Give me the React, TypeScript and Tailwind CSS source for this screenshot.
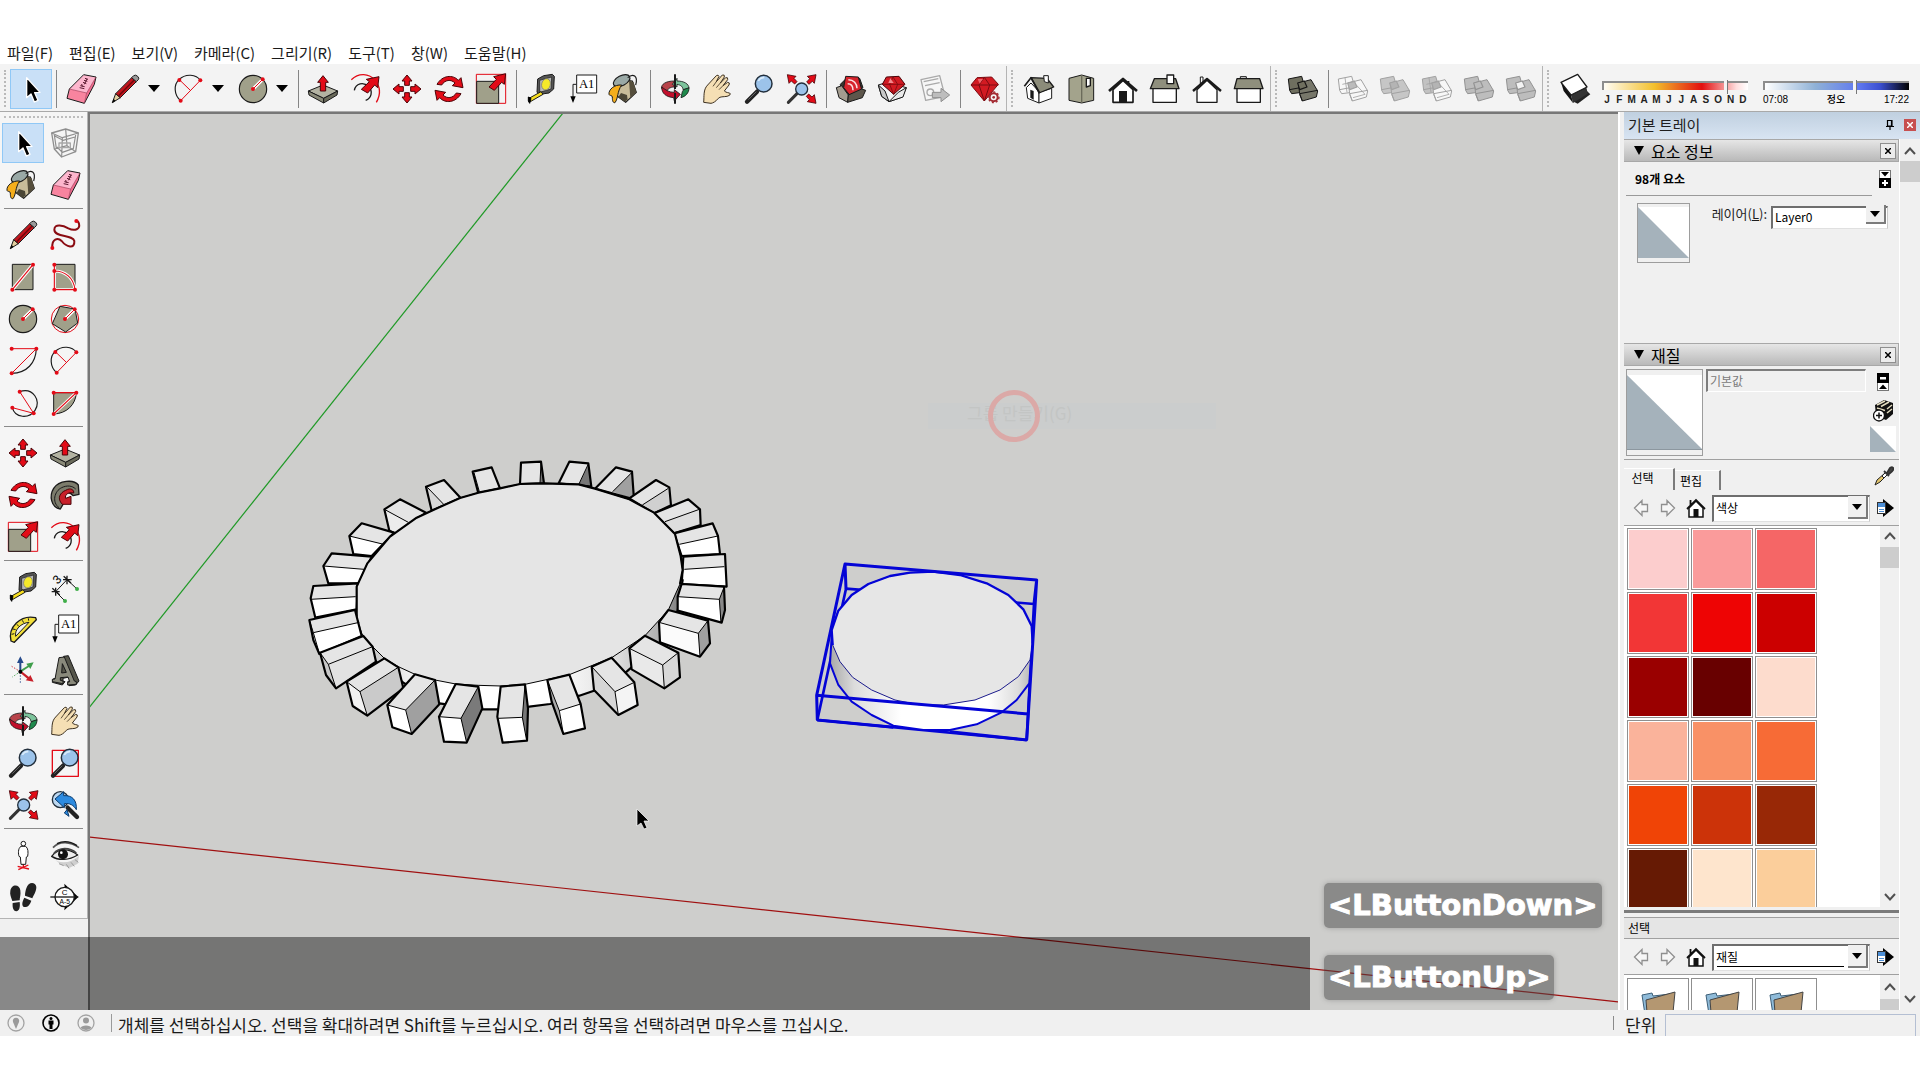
import React, { ReactNode } from "react";

/* ---------- Icon drawings, all on a 96 x 96 grid ---------- */

const RED = "#e30b17";
const DARK = "#1a1a1a";
const OLIVE = "#a0a08a";

function Svg({ children }: { children: ReactNode }) {
  return (
    <svg viewBox="0 0 96 96" className="size-8 shrink-0 overflow-visible" fill="none" strokeLinejoin="round" aria-hidden="true">
      {children}
    </svg>
  );
}

function Dots({ at }: { at: [number, number][] }) {
  return (
    <>
      {at.map(([x, y]) => (
        <circle key={x + "-" + y} cx={x} cy={y} r="6" fill={RED} />
      ))}
    </>
  );
}

const SelectIcon = () => (
  <Svg>
    <path d="M35 14V74L48 63L58 87L69 82L59 59L75 58Z" fill="#000" stroke="#fff" strokeWidth="4" />
  </Svg>
);

const EraserIcon = () => (
  <Svg>
    <path d="M56 5L93 12L65 60L13 48Z" fill="#fdb6cd" />
    <path d="M13 48L65 60L58 91L6 76Z" fill="#f8849f" />
    <path d="M93 12L88 34L58 91L65 60Z" fill="#f06c8e" />
    <path d="M56 5L93 12L88 34L58 91L6 76L13 48Z" stroke={DARK} strokeWidth="3" />
    <path d="M13 48L65 60L93 12M65 60L58 91" stroke="#a33a58" strokeWidth="2" />
    <path d="M44 44l14 3M46 38l13 3M50 33l2 8M54 28l10 4M57 22l10 3M60 16l9 3M66 18l-8 16" stroke="#5c1a30" strokeWidth="3" />
  </Svg>
);

const PencilIcon = () => (
  <Svg>
    <path d="M10 89L20 62L34 74Z" fill="#e3cf9f" stroke={DARK} strokeWidth="3" />
    <path d="M10 89L14 79L19 83Z" fill="#000" stroke="#000" />
    <path d="M20 62L68 14L82 26L34 74Z" fill="#c3141c" stroke={DARK} strokeWidth="3" />
    <path d="M29 68L76 20" stroke="#6c070c" strokeWidth="4" />
    <path d="M68 14L74 8Q80 4 86 10Q92 16 88 20L82 26Z" fill="#9a9a9a" stroke={DARK} strokeWidth="3" />
  </Svg>
);

const ArcIcon = () => (
  <Svg>
    <path d="M23 83C2 66 2 34 18 20C38 0 70 4 82 22" stroke={DARK} strokeWidth="3.5" />
    <path d="M20 21L52 52M82 22L23 83" stroke={RED} strokeWidth="3" />
    <Dots at={[[19, 21], [82, 22], [23, 83]]} />
  </Svg>
);

const CircleIcon = () => (
  <Svg>
    <circle cx="48" cy="48" r="41" fill={OLIVE} stroke={DARK} strokeWidth="3.5" />
    <path d="M48 48L77 19" stroke="#fff" strokeWidth="10" />
    <path d="M48 48L77 19" stroke={RED} strokeWidth="3" />
    <Dots at={[[48, 48], [77, 19]]} />
  </Svg>
);

const PushPullIcon = () => (
  <Svg>
    <path d="M4 54L48 36L92 54L50 76Z" fill="#b3b3a2" stroke={DARK} strokeWidth="3" />
    <path d="M4 54L50 76V90L6 66Z" fill="#8a8a78" stroke={DARK} strokeWidth="3" />
    <path d="M92 54L50 76V90L90 66Z" fill="#6a6a5a" stroke={DARK} strokeWidth="3" />
    <path d="M48 8L64 28H56V54H40V28H32Z" fill={RED} stroke="#4a0408" strokeWidth="3" />
  </Svg>
);

const BigArrow = () => <path d="M90 11L86 44L77 36L56 60L37 49L61 26L52 19Z" fill={RED} stroke="#4a0408" strokeWidth="3" />;

const OffsetIcon = () => (
  <Svg>
    <path d="M7 20C30 -2 60 2 76 20C94 40 96 64 82 88" stroke={RED} strokeWidth="4" />
    <path d="M16 52C20 30 44 26 58 40C74 56 66 76 50 82" stroke={DARK} strokeWidth="4" />
    <BigArrow />
  </Svg>
);

const MoveIcon = () => (
  <Svg>
    {[0, 90, 180, 270].map((a) => (
      <path key={a} transform={`rotate(${a} 48 48)`} d="M48 6L63 24H55V37H41V24H33Z" fill={RED} stroke="#4a0408" strokeWidth="3" />
    ))}
  </Svg>
);

const RotateIcon = () => (
  <Svg>
    {[0, 180].map((a) => (
      <path
        key={a}
        transform={`rotate(${a} 48 48)`}
        d="M12 34C28 6 60 4 76 22L84 14L90 44L58 38L66 30C54 18 36 20 26 36Z"
        fill={RED}
        stroke="#4a0408"
        strokeWidth="3"
      />
    ))}
  </Svg>
);

const ScaleIcon = () => (
  <Svg>
    <rect x="4" y="4" width="88" height="87" stroke={RED} strokeWidth="3" />
    <rect x="5" y="25" width="66" height="66" fill={OLIVE} stroke={DARK} strokeWidth="3" />
    <path d="M92 2L88 34L80 28L58 52L42 42L64 19L56 11Z" fill={RED} stroke="#4a0408" strokeWidth="3" />
  </Svg>
);

const TapeIcon = () => (
  <Svg>
    <path d="M38 18L56 8L82 4L88 10L86 48L72 60L44 64L36 58Z" fill="#555" stroke={DARK} strokeWidth="3" />
    <path d="M44 22L80 12L78 48L44 58Z" fill="#b8b8b8" stroke={DARK} strokeWidth="2" />
    <ellipse cx="63" cy="34" rx="13" ry="17" fill="#f6ea2a" stroke="#777" strokeWidth="2" transform="rotate(15 63 34)" />
    <path d="M48 56L12 76L16 86L54 64Z" fill="#f6dd1e" stroke={DARK} strokeWidth="3" />
    <path d="M10 72L18 76L14 91L10 84Z" fill="#000" stroke="#000" strokeWidth="3" />
  </Svg>
);

const TextIcon = () => (
  <Svg>
    <path d="M28 34H18V74" stroke={DARK} strokeWidth="3" />
    <path d="M18 90L10 70H26Z" fill="#000" />
    <rect x="29" y="6" width="60" height="54" fill="#fff" stroke={DARK} strokeWidth="3" />
    <text x="59" y="46" textAnchor="middle" fontSize="38" fontFamily="Liberation Serif, serif" fill="#000">A1</text>
  </Svg>
);

const PaintIcon = () => (
  <Svg>
    <path d="M24 18L70 24L82 58L50 88L20 66Z" fill="#c8bc9a" stroke={DARK} strokeWidth="3.5" />
    <path d="M60 22L74 28L82 58L64 76Z" fill="#554e3c" />
    <path d="M36 60L54 66L56 80L46 86L28 72Z" fill="#4b4636" />
    <ellipse cx="38" cy="23" rx="27" ry="15" fill="#9aa9a6" stroke={DARK} strokeWidth="3.5" transform="rotate(-28 38 23)" />
    <path d="M56 14C72 0 88 8 80 36" stroke={DARK} strokeWidth="3.5" />
    <path d="M38 36C16 34 -2 50 0 64C2 70 8 64 10 72C10 84 12 90 18 89C28 76 24 56 38 36Z" fill="#f5ae1c" stroke={DARK} strokeWidth="3" />
  </Svg>
);

const OrbitIcon = () => (
  <Svg>
    <path d="M46 24C20 24 6 34 8 46L24 56C24 48 34 42 46 42Z" fill="#b8434a" stroke={DARK} strokeWidth="2.5" />
    <path d="M8 42C8 62 22 72 44 74L46 84L64 64L46 50V58C30 58 22 52 8 42Z" fill="#c2102c" stroke={DARK} strokeWidth="2.5" />
    <path d="M54 16L40 34L54 42V34C66 36 72 42 72 50L90 46C90 32 74 24 54 24Z" fill="#7cc39b" stroke={DARK} strokeWidth="2.5" />
    <path d="M90 44C90 60 80 70 66 74L70 56L74 50Z" fill="#1f8a4d" stroke={DARK} strokeWidth="2.5" />
    <path d="M48 4V48M48 60V92" stroke={DARK} strokeWidth="6" />
  </Svg>
);

const HandIcon = () => (
  <Svg>
    <path
      d="M8 88C10 70 6 50 20 36L46 8Q52 4 54 10L46 26L64 6Q72 4 70 12L58 30L74 14Q82 12 80 20L66 38L80 28Q88 28 84 36L70 54C76 60 84 58 88 62Q88 68 78 70C66 72 58 70 52 76C44 86 36 90 30 91Z"
      fill="#f5dfb4"
      stroke="#3c3020"
      strokeWidth="3"
    />
    <path d="M46 26L36 40M58 30L46 44M66 38L54 50" stroke="#3c3020" strokeWidth="2.5" />
  </Svg>
);

const Glass = () => (
  <>
    <path d="M12 86L42 56" stroke="#222" strokeWidth="13" strokeLinecap="round" />
    <path d="M16 80L40 56" stroke="#666" strokeWidth="3" />
    <circle cx="62" cy="32" r="25" fill="#9cc3ea" stroke="#222f3c" strokeWidth="4.5" />
    <path d="M46 24A18 18 0 0 1 64 14" stroke="#d8ebfb" strokeWidth="5" />
  </>
);

const ZoomIcon = () => (
  <Svg>
    <Glass />
  </Svg>
);

const ZoomWindowIcon = () => (
  <Svg>
    <rect x="10" y="10" width="78" height="78" stroke={RED} strokeWidth="4" />
    <Glass />
  </Svg>
);

const ZoomExtentsIcon = () => (
  <Svg>
    <path d="M10 88L36 62" stroke="#333" strokeWidth="9" strokeLinecap="round" />
    <circle cx="50" cy="48" r="18" fill="#9cc3ea" stroke="#222f3c" strokeWidth="4" />
    {[0, 90, 180].map((a) => (
      <path key={a} transform={`rotate(${a} 50 48)`} d="M7 5L33 10L27 16L36 26L29 33L19 24L12 31Z" fill={RED} stroke="#4a0408" strokeWidth="2.5" />
    ))}
  </Svg>
);

const Carton = () => (
  <>
    <path d="M4 36L30 28L88 44L76 72L36 86L14 70Z" fill="#f4f4f4" stroke={DARK} strokeWidth="3" />
    <path d="M4 36L24 54L36 86L14 70Z" fill="#c9c9c9" stroke={DARK} strokeWidth="3" />
    <path d="M88 44L64 58L36 86L78 72Z" fill="#e9e9e9" stroke={DARK} strokeWidth="3" />
  </>
);

const WarehouseIcon = () => (
  <Svg>
    <path d="M16 34L38 12L74 16L84 44L40 76L22 66Z" fill="#3a352e" stroke={DARK} strokeWidth="3" />
    <path d="M32 10L70 12L80 50L44 66L26 44Z" fill="#d7242c" stroke={DARK} strokeWidth="3" />
    <path d="M40 20C56 20 66 32 66 46M38 32C48 32 54 40 54 52" stroke="#fbe3e3" strokeWidth="4.5" />
    <path d="M4 44L20 38L40 66L38 88L12 74Z" fill="#a39c8f" stroke={DARK} strokeWidth="3" />
    <path d="M40 66L80 48L92 52L82 74L38 88Z" fill="#5d564b" stroke={DARK} strokeWidth="3" />
  </Svg>
);

const ExtensionIcon = () => (
  <Svg>
    <Carton />
    <path d="M28 12L66 10L84 34L50 64L16 34Z" fill="#d21a22" stroke="#4a0408" strokeWidth="3" />
    <path d="M16 34H84M38 34L50 64L62 34L48 12Z" stroke="#7c0a10" strokeWidth="2.5" />
    <path d="M40 16L50 30L34 30Z" fill="#f48a8e" />
  </Svg>
);

const LayoutIcon = () => (
  <Svg>
    <path d="M6 20L62 8L78 70L20 82Z" fill="#f6f6f6" stroke="#a9a9a9" strokeWidth="4" />
    <path d="M14 26L58 17M18 38L62 29" stroke="#a9a9a9" strokeWidth="4" />
    <circle cx="34" cy="58" r="10" stroke="#a9a9a9" strokeWidth="4" />
    <path d="M40 58H66V46L92 66L66 86V74H40Z" fill="#bdbdbd" stroke="#8f8f8f" strokeWidth="3" />
  </Svg>
);

const GemIcon = () => (
  <Svg>
    <path d="M24 14L68 12L88 34L46 84L6 36Z" fill="#d21a22" stroke="#7c0a10" strokeWidth="3" />
    <path d="M6 36H88M30 36L46 84L62 36L46 13Z" stroke="#7c0a10" strokeWidth="3" />
    <path d="M26 18H42L32 32Z" fill="#f1666c" />
    <circle cx="74" cy="73" r="12" fill="#f3f3f3" stroke="#a32a31" strokeWidth="6" />
    <circle cx="74" cy="73" r="4" fill="#a32a31" />
    <circle cx="74" cy="73" r="16" stroke="#a32a31" strokeWidth="4" strokeDasharray="6 6" />
  </Svg>
);

/* House views */
const HouseIsoIcon = () => (
  <Svg>
    <path d="M10 44L24 30L48 56V90L14 76Z" fill="#fff" stroke={DARK} strokeWidth="3" />
    <path d="M48 58L86 46V76L48 90Z" fill="#fff" stroke={DARK} strokeWidth="3" />
    <path d="M24 14L72 16L92 42L48 60Z" fill="#8c8c7a" stroke={DARK} strokeWidth="4" />
    <path d="M4 40L24 14L50 60" stroke={DARK} strokeWidth="5" />
    <path d="M62 8H76V30L64 26Z" fill="#fff" stroke={DARK} strokeWidth="3" />
    <path d="M22 50L32 54V80L22 74Z" fill={DARK} />
  </Svg>
);
const HouseTopIcon = () => (
  <Svg>
    <path d="M12 16L50 6L86 16V82L50 90L12 82Z" fill="#a3a38c" stroke={DARK} strokeWidth="3" />
    <path d="M50 6V90" stroke="#6b6b5a" strokeWidth="4" />
    <path d="M64 16H76V38L64 42Z" fill="#fff" stroke={DARK} strokeWidth="4" />
  </Svg>
);
const HouseFrontIcon = () => (
  <Svg>
    <path d="M18 50V88H78V50L48 22Z" fill="#fff" stroke={DARK} strokeWidth="5" />
    <path d="M6 54L48 18L90 54" stroke={DARK} strokeWidth="8" />
    <path d="M64 24V32" stroke={DARK} strokeWidth="6" />
    <path d="M36 88V54H60V88Z" fill={DARK} />
  </Svg>
);
const HouseRightIcon = () => (
  <Svg>
    <rect x="12" y="44" width="70" height="44" fill="#fff" stroke={DARK} strokeWidth="4" />
    <path d="M16 17H80L90 47H4Z" fill="#8f8f7d" stroke={DARK} strokeWidth="4" />
    <rect x="54" y="6" width="20" height="26" fill="#fff" stroke={DARK} strokeWidth="4" />
  </Svg>
);
const HouseBackIcon = () => (
  <Svg>
    <path d="M28 34V12H36V28" fill="#fff" stroke={DARK} strokeWidth="3" />
    <path d="M18 50V88H78V50L48 22Z" fill="#fff" stroke={DARK} strokeWidth="4" />
    <path d="M6 54L48 18L90 54" stroke={DARK} strokeWidth="7" />
  </Svg>
);
const HouseLeftIcon = () => (
  <Svg>
    <path d="M22 16V11H40V16" fill="#ddd" stroke={DARK} strokeWidth="3" />
    <rect x="12" y="44" width="70" height="44" fill="#fff" stroke={DARK} strokeWidth="4" />
    <path d="M12 17H80L90 47H4Z" fill="#8f8f7d" stroke={DARK} strokeWidth="4" />
  </Svg>
);

/* Two overlapping slabs; the fills and edges tell the boolean operations apart */
function Slabs({ a, b, mid, line, wire }: { a: string; b: string; mid: string; line: string; wire?: boolean }) {
  return (
    <Svg>
      <path d="M4 18L44 10L54 44L46 58L14 62L8 52Z" fill={a} stroke={line} strokeWidth="3" />
      <path d="M8 50L50 42" stroke={line} strokeWidth="3" />
      <path d="M34 30L72 20L92 54L88 72L46 84L38 62Z" fill={b} stroke={line} strokeWidth="3" />
      <path d="M38 62L92 52M38 64L46 84" stroke={line} strokeWidth="3" />
      <path d="M32 30L52 24L60 42L38 50Z" fill={mid} stroke={line} strokeWidth="3.5" />
      {wire && <path d="M16 34L52 26M24 14L30 58M56 34L84 64M48 74L84 64" stroke={line} strokeWidth="2.5" />}
    </Svg>
  );
}

const ShadowIcon = () => (
  <Svg>
    <path d="M40 84L56 92L94 64L80 50Z" fill="#222" />
    <path d="M6 28L36 66L42 90L14 54Z" fill="#111" />
    <path d="M36 66L82 42L86 62L42 90Z" fill="#333" />
    <path d="M6 28L56 4L84 42L36 66Z" fill="#fff" stroke={DARK} strokeWidth="4" />
  </Svg>
);

const ComponentIcon = () => (
  <Svg>
    <path d="M8 18L50 6L88 18L80 74L38 90L16 66Z" fill="#f4f4f4" stroke="#8e8e8e" strokeWidth="4" />
    <path d="M8 18L40 32L88 18M40 32L38 90M16 26L42 40L78 30M24 60L40 76L74 64M50 6L54 56L80 74M54 56L16 66M16 24L22 64M80 24L72 70" stroke="#8e8e8e" strokeWidth="3.5" />
    <path d="M30 48H64V62H30Z" stroke="#a8a8a8" strokeWidth="4" />
  </Svg>
);

const FreehandIcon = () => (
  <Svg>
    <path d="M10 86C8 60 26 54 38 66C52 84 78 92 76 66C72 46 16 56 16 32C16 12 44 20 58 28C78 38 94 30 90 14Q88 6 82 6" stroke="#8a0c12" strokeWidth="6" />
    <Dots at={[[10, 87], [82, 6]]} />
  </Svg>
);

const RectIcon = () => (
  <Svg>
    <rect x="16" y="10" width="62" height="76" fill={OLIVE} stroke={DARK} strokeWidth="3" />
    <path d="M16 86L78 11" stroke="#fff" strokeWidth="10" />
    <path d="M16 86L78 11" stroke={RED} strokeWidth="3.5" />
    <Dots at={[[16, 86], [78, 11]]} />
  </Svg>
);

const RotRectIcon = () => (
  <Svg>
    <rect x="16" y="10" width="62" height="76" fill={OLIVE} stroke={DARK} strokeWidth="3" />
    <path d="M16 30C46 30 74 48 78 86H16V11" fill="none" stroke="#fff" strokeWidth="9" />
    <path d="M16 30C46 30 74 48 78 86H16V11" stroke={RED} strokeWidth="3.5" />
    <Dots at={[[16, 11], [16, 30], [16, 86], [78, 86]]} />
  </Svg>
);

const PolygonIcon = () => (
  <Svg>
    <circle cx="48" cy="48" r="41" stroke={RED} strokeWidth="3" />
    <path d="M33 10L78 18L86 60L50 87L10 62Z" fill={OLIVE} stroke={DARK} strokeWidth="3" />
    <path d="M48 48L77 19" stroke="#fff" strokeWidth="10" />
    <path d="M48 48L77 19" stroke={RED} strokeWidth="3" />
    <Dots at={[[48, 48], [77, 19]]} />
  </Svg>
);

const TwoPointArcIcon = () => (
  <Svg>
    <path d="M88 11C86 54 60 84 14 85" stroke={DARK} strokeWidth="3.5" />
    <path d="M14 11H88L14 85" stroke={RED} strokeWidth="3" />
    <Dots at={[[14, 11], [88, 11], [14, 85]]} />
  </Svg>
);

const ThreePointArcIcon = () => (
  <Svg>
    <path d="M38 14C78 0 104 42 84 70C66 96 24 94 16 62" stroke={DARK} strokeWidth="3.5" />
    <path d="M38 14L80 79L16 62" stroke={RED} strokeWidth="3" />
    <Dots at={[[38, 14], [80, 79], [16, 62]]} />
  </Svg>
);

const PieIcon = () => (
  <Svg>
    <path d="M14 17H82C80 54 52 80 14 81Z" fill={OLIVE} stroke={DARK} strokeWidth="3" />
    <path d="M14 81L82 17" stroke="#fff" strokeWidth="9" />
    <path d="M14 17H82L14 81" stroke={RED} strokeWidth="3.5" />
    <Dots at={[[14, 17], [82, 17], [14, 81]]} />
  </Svg>
);

const FollowMeIcon = () => (
  <Svg>
    <path d="M34 90C6 86 0 50 14 28C30 4 74 0 88 18L90 46L72 50C60 34 36 40 36 58C36 66 38 70 42 76Z" fill="#7c7c6c" stroke={DARK} strokeWidth="4" />
    <path d="M30 86C8 70 16 36 38 26C54 18 70 20 80 30" stroke={DARK} strokeWidth="3" />
    <path d="M50 34C66 24 76 34 74 42C58 38 46 48 50 58L66 52V76L40 76C22 58 34 40 50 34Z" fill="#c8202a" stroke="#4a0408" strokeWidth="3" />
  </Svg>
);

const DimensionIcon = () => (
  <Svg>
    <path d="M20 62L54 26M20 62L46 88M54 26L84 54" stroke={DARK} strokeWidth="3" />
    <path d="M10 52L32 72M8 62H32M20 50V74M44 16L66 36M42 26H68M54 14V40" stroke={DARK} strokeWidth="4" />
    <circle cx="48" cy="90" r="6" fill="#3fae49" />
    <circle cx="84" cy="54" r="6" fill="#3fae49" />
    <text x="14" y="38" fontSize="36" fontFamily="Liberation Sans, sans-serif" fill="#000" transform="rotate(-45 24 26)">3</text>
  </Svg>
);

const ProtractorIcon = () => (
  <Svg>
    <path d="M12 84C2 44 40 4 86 14L88 20L22 88Z" fill="#f2df3a" stroke={DARK} strokeWidth="4" />
    <path d="M26 70C22 50 42 30 66 28Z" fill="#f3f3f3" stroke={DARK} strokeWidth="3" />
    <path d="M14 64l8 -2M18 48l8 2M30 34l5 6M46 22l4 7M64 16l1 7" stroke={DARK} strokeWidth="3" />
  </Svg>
);

const AxesIcon = () => (
  <Svg>
    <path d="M40 50L14 34" stroke="#c8202a" strokeWidth="3" strokeDasharray="4 5" />
    <path d="M40 50L16 66" stroke="#3f9e4b" strokeWidth="3" strokeDasharray="4 5" />
    <path d="M40 52V84" stroke="#254a8c" strokeWidth="3" strokeDasharray="4 5" />
    <path d="M40 4L50 24H43V48H37V24H30Z" fill="#254a8c" />
    <path d="M80 22L70 42L66 36L42 52L40 46L62 32L58 26Z" fill="#3f9e4b" />
    <path d="M80 80L56 76L61 71L38 52L43 48L66 66L70 60Z" fill="#c8202a" />
    <circle cx="40" cy="50" r="6" fill="#000" />
  </Svg>
);

const Text3dIcon = () => (
  <Svg>
    <path d="M44 4L58 2L90 78L80 90L60 92L56 80L64 76L60 66L42 70L42 78L48 80L40 90L10 82L12 72L20 70Z" fill="#55554a" stroke={DARK} strokeWidth="3" />
    <path
      d="M30 8L46 6L76 78L82 80V88L56 90V82L62 80L57 66L34 68L34 76L42 78V86L10 80V73L18 72ZM38 54L52 52L40 26Z"
      fill="#8a8a7c"
      stroke={DARK}
      strokeWidth="3"
      fillRule="evenodd"
    />
  </Svg>
);

const PreviousIcon = () => (
  <Svg>
    <path d="M56 56L84 84" stroke="#222" strokeWidth="13" strokeLinecap="round" />
    <circle cx="34" cy="32" r="24" fill="#bcd8f1" stroke="#222f3c" strokeWidth="4" />
    <path d="M18 30L44 8V20C70 18 84 34 82 62C74 48 62 42 46 44V56Z" fill="#2d8be0" stroke="#0c3a6b" strokeWidth="3" />
    <path d="M54 62L60 82L46 72Z" fill="#2d8be0" stroke="#0c3a6b" strokeWidth="3" />
  </Svg>
);

const PositionCameraIcon = () => (
  <Svg>
    <path d="M32 82L66 90M64 78L34 92M49 72V88" stroke={RED} strokeWidth="4" />
    <circle cx="49" cy="14" r="7" fill="#fff" stroke={DARK} strokeWidth="3" />
    <path d="M42 22C32 28 34 46 36 52L40 54L42 76H56L58 54L62 52C64 40 64 28 56 22Z" fill="#fff" stroke={DARK} strokeWidth="3" />
  </Svg>
);

const EyeIcon = () => (
  <Svg>
    <path d="M12 26C32 4 64 8 90 26" stroke="#555" strokeWidth="5" />
    <path d="M24 14C44 4 66 8 84 20" stroke={DARK} strokeWidth="4" />
    <path d="M10 56C30 76 64 74 90 50L86 74L62 86L38 78Z" fill="#cfcfcf" />
    <path d="M30 74L44 80M52 76L60 88M66 70L76 82M78 62L88 70" stroke="#9a9a9a" strokeWidth="3" />
    <path d="M8 52C26 28 58 26 86 48C60 64 30 66 8 52Z" fill="#ededed" stroke={DARK} strokeWidth="4" />
    <path d="M14 44C30 24 62 24 82 42" stroke="#444" strokeWidth="5" />
    <circle cx="42" cy="46" r="15" fill="#111" />
    <circle cx="37" cy="41" r="4" fill="#fff" />
  </Svg>
);

const FeetIcon = () => (
  <Svg>
    <path d="M10 30C12 8 38 8 40 28C42 42 38 50 38 58L16 60C12 48 8 40 10 30ZM17 66L38 63C40 76 38 90 28 91C18 90 16 78 17 66Z" fill="#222" />
    <path d="M58 22C64 0 86 2 88 18C88 32 80 42 76 52L54 44C54 36 56 28 58 22ZM52 50L73 59C68 72 62 80 50 78C42 70 48 58 52 50Z" fill="#222" />
  </Svg>
);

const SectionIcon = () => (
  <Svg>
    <path d="M46 8L88 48L46 88L50 48Z" fill="#000" />
    <circle cx="47" cy="48" r="29" fill="#fff" stroke={DARK} strokeWidth="4" />
    <path d="M4 48H88" stroke={DARK} strokeWidth="4" />
    <text x="47" y="43" textAnchor="middle" fontSize="24" fontFamily="Liberation Sans, sans-serif" fill="#000">C</text>
    <text x="47" y="69" textAnchor="middle" fontSize="20" fontFamily="Liberation Sans, sans-serif" fill="#000">A-5</text>
  </Svg>
);

/* ---------- Tool bars ---------- */

function Tool({ label, active, children }: { label: string; active?: boolean; children: ReactNode }) {
  return (
    <button
      type="button"
      aria-label={label}
      aria-pressed={active}
      className={
        active
          ? "flex h-10 w-[42px] shrink-0 items-center justify-center border border-[#90c8f6] bg-[#c9e0f7]"
          : "flex h-10 w-[42px] shrink-0 items-center justify-center"
      }
    >
      {children}
    </button>
  );
}

function DropTool({ label, children }: { label: string; children: ReactNode }) {
  return (
    <div className="flex shrink-0 items-center">
      <button type="button" aria-label={label} className="flex h-10 w-[46px] items-center justify-center">
        {children}
      </button>
      <button type="button" aria-label={label + " 옵션"} className="flex h-10 w-[18px] items-center">
        <svg viewBox="0 0 12 7" className="h-[7px] w-3" aria-hidden="true">
          <path d="M0 0H12L6 7Z" fill="#000" />
        </svg>
      </button>
    </div>
  );
}

const VSep = () => (
  <div className="flex h-[38px] w-2 shrink-0 justify-center">
    <div className="w-px bg-[#858585]" />
  </div>
);

const BarGap = () => (
  <div className="flex h-full w-3 shrink-0 gap-1">
    <div className="w-px bg-[#b4b4b4]" />
    <div className="my-1 w-0 border-l-2 border-dotted border-[#b9b9b9]" />
  </div>
);

const HSep = () => (
  <div className="flex h-2 items-start px-1 pt-0.5">
    <div className="h-px flex-1 bg-[#8a8a8a]" />
  </div>
);

const MENUS = ["파일(F)", "편집(E)", "보기(V)", "카메라(C)", "그리기(R)", "도구(T)", "창(W)", "도움말(H)"];
const MONTHS = ["J", "F", "M", "A", "M", "J", "J", "A", "S", "O", "N", "D"];

function TopToolbar() {
  return (
    <div className="flex h-12 shrink-0 items-center border-b border-[#a9a9a9] bg-[#f3f3f3] pt-0.5" role="toolbar" aria-label="도구 모음">
      <div className="flex h-full w-[10px] shrink-0 pl-1">
        <div className="my-1 w-0 border-l-2 border-dotted border-[#b9b9b9]" />
      </div>
      <Tool label="선택" active><SelectIcon /></Tool>
      <VSep />
      <Tool label="지우개"><EraserIcon /></Tool>
      <DropTool label="선"><PencilIcon /></DropTool>
      <DropTool label="호"><ArcIcon /></DropTool>
      <DropTool label="원"><CircleIcon /></DropTool>
      <VSep />
      <Tool label="밀기/끌기"><PushPullIcon /></Tool>
      <Tool label="간격띄우기"><OffsetIcon /></Tool>
      <Tool label="이동"><MoveIcon /></Tool>
      <Tool label="회전"><RotateIcon /></Tool>
      <Tool label="배율"><ScaleIcon /></Tool>
      <VSep />
      <Tool label="줄자"><TapeIcon /></Tool>
      <Tool label="텍스트"><TextIcon /></Tool>
      <Tool label="페인트통"><PaintIcon /></Tool>
      <VSep />
      <Tool label="궤도"><OrbitIcon /></Tool>
      <Tool label="이동 보기"><HandIcon /></Tool>
      <Tool label="확대/축소"><ZoomIcon /></Tool>
      <Tool label="범위 확대"><ZoomExtentsIcon /></Tool>
      <VSep />
      <Tool label="3D Warehouse"><WarehouseIcon /></Tool>
      <Tool label="Extension Warehouse"><ExtensionIcon /></Tool>
      <Tool label="LayOut으로 보내기"><LayoutIcon /></Tool>
      <VSep />
      <Tool label="확장 관리자"><GemIcon /></Tool>
      <BarGap />
      <Tool label="등각투영"><HouseIsoIcon /></Tool>
      <Tool label="평면도"><HouseTopIcon /></Tool>
      <Tool label="정면도"><HouseFrontIcon /></Tool>
      <Tool label="우측면도"><HouseRightIcon /></Tool>
      <Tool label="배면도"><HouseBackIcon /></Tool>
      <Tool label="좌측면도"><HouseLeftIcon /></Tool>
      <BarGap />
      <Tool label="외부 셸"><Slabs a="#6f6f5f" b="#77776a" mid="#6f6f5f" line="#161616" /></Tool>
      <VSep />
      <Tool label="교차"><Slabs a="#f7f7f7" b="#f7f7f7" mid="#bcbcbc" line="#a2a2a2" wire /></Tool>
      <Tool label="결합"><Slabs a="#c6c6c6" b="#c6c6c6" mid="#b4b4b4" line="#a2a2a2" /></Tool>
      <Tool label="빼기"><Slabs a="#c2c2c2" b="#f7f7f7" mid="#b4b4b4" line="#a2a2a2" wire /></Tool>
      <Tool label="자르기"><Slabs a="#bdbdbd" b="#bdbdbd" mid="#bdbdbd" line="#939393" /></Tool>
      <Tool label="분할"><Slabs a="#bdbdbd" b="#bdbdbd" mid="#f3f3f3" line="#939393" /></Tool>
      <BarGap />
      <Tool label="그림자"><ShadowIcon /></Tool>
      <div className="ml-1.5 flex w-[146px] shrink-0 flex-col gap-1 self-stretch pt-[15px]">
        <input
          type="range"
          aria-label="날짜"
          min={0}
          max={100}
          defaultValue={86}
          className="block h-[9px] w-full appearance-none border-t-2 border-l-2 border-[#8d8d8d] bg-[linear-gradient(90deg,#fffdf5,#f3c02c_35%,#e30f0f_68%,#ffdede_92%,#fff)] [&::-webkit-slider-thumb]:h-[14px] [&::-webkit-slider-thumb]:w-1 [&::-webkit-slider-thumb]:appearance-none [&::-webkit-slider-thumb]:border-r [&::-webkit-slider-thumb]:border-[#777] [&::-webkit-slider-thumb]:bg-[#f4f4f4]"
        />
        <div className="flex justify-between font-['Liberation_Sans',sans-serif] text-[10px] leading-3 font-bold text-[#222]">
          {MONTHS.map((m, i) => (
            <span key={i} className="w-2.5 text-center">{m}</span>
          ))}
        </div>
      </div>
      <div className="ml-[15px] flex w-[146px] shrink-0 flex-col gap-1 self-stretch pt-[15px]">
        <input
          type="range"
          aria-label="시간"
          min={0}
          max={100}
          defaultValue={63}
          className="block h-[9px] w-full appearance-none border-t-2 border-l-2 border-[#8d8d8d] bg-[linear-gradient(90deg,#fff,#8fb1d6_35%,#5f78f0_65%,#3b4fd0_80%,#000)] [&::-webkit-slider-thumb]:h-[14px] [&::-webkit-slider-thumb]:w-1 [&::-webkit-slider-thumb]:appearance-none [&::-webkit-slider-thumb]:border-r [&::-webkit-slider-thumb]:border-[#777] [&::-webkit-slider-thumb]:bg-[#f4f4f4]"
        />
        <div className="flex justify-between font-['Liberation_Sans','Noto_Sans_CJK_KR',sans-serif] text-[10px] leading-3 text-black">
          <span>07:08</span>
          <span className="font-medium">정오</span>
          <span>17:22</span>
        </div>
      </div>
    </div>
  );
}

const Pair = ({ children }: { children: ReactNode }) => <div className="flex h-[42px] px-0.5 pt-px">{children}</div>;

function LeftToolbar() {
  return (
    <aside className="flex w-[88px] shrink-0 flex-col bg-[#f0f0f0]">
      <div className="border-r border-b border-[#b4b4b4] bg-[#f5f5f5]" role="toolbar" aria-label="큰 도구 세트">
        <div className="h-[10px] px-1 pt-1">
          <div className="h-0 border-t-2 border-dotted border-[#bdbdbd]" />
        </div>
        <Pair><Tool label="선택 도구" active><SelectIcon /></Tool><Tool label="구성요소 만들기"><ComponentIcon /></Tool></Pair>
        <Pair><Tool label="페인트"><PaintIcon /></Tool><Tool label="지우기"><EraserIcon /></Tool></Pair>
        <HSep />
        <Pair><Tool label="선 그리기"><PencilIcon /></Tool><Tool label="자유형"><FreehandIcon /></Tool></Pair>
        <Pair><Tool label="직사각형"><RectIcon /></Tool><Tool label="회전된 직사각형"><RotRectIcon /></Tool></Pair>
        <Pair><Tool label="원 그리기"><CircleIcon /></Tool><Tool label="다각형"><PolygonIcon /></Tool></Pair>
        <Pair><Tool label="2점 호"><TwoPointArcIcon /></Tool><Tool label="호 그리기"><ArcIcon /></Tool></Pair>
        <Pair><Tool label="3점 호"><ThreePointArcIcon /></Tool><Tool label="파이"><PieIcon /></Tool></Pair>
        <HSep />
        <Pair><Tool label="이동 도구"><MoveIcon /></Tool><Tool label="밀기"><PushPullIcon /></Tool></Pair>
        <Pair><Tool label="회전 도구"><RotateIcon /></Tool><Tool label="따라가기"><FollowMeIcon /></Tool></Pair>
        <Pair><Tool label="배율 도구"><ScaleIcon /></Tool><Tool label="오프셋"><OffsetIcon /></Tool></Pair>
        <HSep />
        <Pair><Tool label="줄자 도구"><TapeIcon /></Tool><Tool label="치수"><DimensionIcon /></Tool></Pair>
        <Pair><Tool label="각도기"><ProtractorIcon /></Tool><Tool label="텍스트 도구"><TextIcon /></Tool></Pair>
        <Pair><Tool label="축"><AxesIcon /></Tool><Tool label="3D 텍스트"><Text3dIcon /></Tool></Pair>
        <HSep />
        <Pair><Tool label="궤도 도구"><OrbitIcon /></Tool><Tool label="상하좌우 이동"><HandIcon /></Tool></Pair>
        <Pair><Tool label="확대"><ZoomIcon /></Tool><Tool label="창 확대"><ZoomWindowIcon /></Tool></Pair>
        <Pair><Tool label="전체 범위"><ZoomExtentsIcon /></Tool><Tool label="이전"><PreviousIcon /></Tool></Pair>
        <HSep />
        <Pair><Tool label="카메라 배치"><PositionCameraIcon /></Tool><Tool label="둘러보기"><EyeIcon /></Tool></Pair>
        <Pair><Tool label="걷기"><FeetIcon /></Tool><Tool label="단면"><SectionIcon /></Tool></Pair>
      </div>
    </aside>
  );
}

/* ---------- 3D model ---------- */

type Face = [points: string, fill: string];
type Tooth = { outline: string; faces: Face[]; lines?: string };

const TOP = "#e5e5e5";

const BACK_TEETH: Tooth[] = [
  { outline: "605,82 630,145 565,160 548,95", faces: [["548,95 568,155 565,160", "#999"]], lines: "M552 98L568 155" },
  { outline: "462,120 512,174 425,212 408,140", faces: [["408,140 460,192 425,212", "#d8d8d8"]], lines: "M412 142L460 192" },
  { outline: "330,178 408,218 318,282 298,272 283,208", faces: [["283,208 355,247 310,282 298,272", "#ececec"]], lines: "M283 208L355 247" },
  { outline: "215,250 312,278 245,348 190,342 178,288", faces: [["178,288 277,312 245,348 190,342", "#fff"]], lines: "M178 288L277 312" },
  { outline: "125,340 245,350 207,430 115,430 100,378", faces: [["100,378 222,388 207,430 115,430", "#fff"]], lines: "M100 378L222 388" },
  { outline: "70,438 204,430 200,508 76,533 62,475", faces: [["62,478 197,470 200,508 76,533", "#fff"]], lines: "M62 478L197 470" },
  { outline: "693,68 753,65 762,130 690,132", faces: [["753,68 762,130 750,130", "#777"]], lines: "M753 68L750 130" },
  { outline: "838,65 895,70 904,140 806,130", faces: [["895,75 904,140 866,134", "#777"]], lines: "M895 72L866 134" },
  { outline: "978,82 1026,95 1032,178 915,146", faces: [["1026,97 1032,178 968,155", "#a0a0a0"]], lines: "M1026 97L968 155" },
  { outline: "1098,120 1138,142 1143,196 1092,220 1018,175", faces: [["1135,145 1143,196 1095,218 1057,195", "#d0d0d0"]], lines: "M1135 145L1057 195" },
  { outline: "1195,178 1230,208 1232,255 1152,280 1092,220", faces: [["1228,208 1232,255 1150,278 1125,245", "#dedede"]], lines: "M1228 208L1125 245" },
  { outline: "1268,250 1284,288 1290,342 1175,348 1152,280", faces: [["1284,288 1290,340 1175,348 1168,313", "#fff"]], lines: "M1284 288L1168 313" },
  { outline: "1305,342 1310,440 1175,432 1180,350", faces: [["1303,380 1310,440 1178,430 1183,388", "#fff"]], lines: "M1303 380L1183 388" },
];

const FRONT_TEETH: Tooth[] = [
  { outline: "195,510 215,588 88,642 70,600 58,540", faces: [["70,578 208,547 215,588 86,642", "#fff"]], lines: "M58 540L70 578L208 547M70 578L88 640" },
  { outline: "1175,432 1302,440 1305,510 1295,548 1163,512 1163,470", faces: [["1163,470 1288,478 1292,548 1163,512", "#fff"], ["1288,478 1302,442 1305,510 1292,548", "#888"]], lines: "M1163 470L1288 478L1302 442M1288 478L1293 548" },
  { outline: "220,588 248,620 258,665 138,745 108,705 90,638", faces: [["90,638 115,673 138,745 108,705", "#c8c8c8"], ["248,620 258,665 138,745 115,673", "#e2e2e2"]], lines: "M90 638L115 673L248 620M115 673L138 745" },
  { outline: "1135,510 1254,542 1260,610 1230,650 1110,607 1107,547", faces: [["1107,547 1225,580 1230,650 1110,607", "#fbfbfb"], ["1225,580 1254,542 1260,610 1230,650", "#a0a0a0"]], lines: "M1107 547L1225 580L1254 542M1225 580L1230 650" },
  { outline: "283,655 325,682 340,745 232,827 188,798 170,725", faces: [["170,725 210,755 232,827 188,798", "#f2f2f2"], ["325,682 340,745 232,827 210,755", "#cacaca"]], lines: "M170 725L210 755L325 682M210 755L232 827" },
  { outline: "1065,587 1165,638 1170,712 1123,745 1025,688 1018,625", faces: [["1018,625 1118,675 1123,745 1025,688", "#e9e9e9"], ["1118,675 1165,638 1170,712 1123,745", "#d8d8d8"]], lines: "M1018 625L1118 675L1165 638M1118 675L1123 745" },
  { outline: "375,703 435,720 448,793 365,882 307,862 292,795", faces: [["292,795 347,810 365,882 307,862", "#fff"], ["435,720 448,793 365,882 347,810", "#a0a0a0"]], lines: "M292 795L347 810L435 720M347 810L365 882" },
  { outline: "965,653 1033,727 1043,795 985,825 912,750 905,680", faces: [["905,680 975,755 985,825 912,750", "#d6d6d6"], ["975,755 1033,727 1043,795 985,825", "#f4f4f4"]], lines: "M905 680L975 755L1033 727M975 755L985 825" },
  { outline: "497,732 565,740 577,805 530,908 462,905 447,830", faces: [["447,830 513,835 530,908 462,905", "#fff"], ["565,740 577,805 530,908 513,835", "#7a7a7a"]], lines: "M447 830L513 835L565 740M513 835L530 908" },
  { outline: "838,704 872,792 885,865 820,882 785,785 772,720", faces: [["772,720 808,812 820,882 785,785", "#a8a8a8"], ["808,812 872,792 885,865 820,882", "#fff"]], lines: "M772 720L808 812L872 792M808 812L820 882" },
  { outline: "632,740 705,733 714,805 711,902 638,908 622,830", faces: [["622,835 697,832 711,902 638,908", "#fff"], ["705,733 714,805 710,902 697,832", "#777"]], lines: "M625 835L697 832L705 735M697 832L710 902" },
];

const RIM_BACK = "M200 530V440L232 370L300 290L380 233L425 212L510 174L565 158L630 145L690 132L762 130L866 133L915 146L1018 178L1092 218L1155 282L1172 348L1178 390L1170 432";
const RIM_FRONT = "L1135 510L1065 587L965 653L838 704L705 733L632 738L565 736L497 732L435 720L375 703L325 680L283 655L248 620L215 580Z";

function ToothShape({ tooth }: { tooth: Tooth }) {
  return (
    <g>
      <polygon points={tooth.outline} fill={TOP} />
      {tooth.faces.map(([points, fill], i) => (
        <polygon key={i} points={points} fill={fill} />
      ))}
      {tooth.lines && <path d={tooth.lines} stroke="#000" strokeWidth="3" fill="none" />}
      <polygon points={tooth.outline} fill="none" stroke="#000" strokeWidth="6.5" />
    </g>
  );
}

function Gear() {
  return (
    <g transform="translate(290 440) scale(0.33333)" strokeLinejoin="round">
      {BACK_TEETH.map((t, i) => <ToothShape key={i} tooth={t} />)}
      <path d="M200 530L215 600L258 665L340 728L448 790L577 808L625 808L718 800L780 792L868 767L912 752L1010 695L1110 607L1163 512L1178 420L700 300Z" fill="url(#gear-wall)" stroke="#000" strokeWidth="6.5" />
      <path d={RIM_BACK + RIM_FRONT} fill={TOP} stroke="#000" strokeWidth="3" />
      <path d={RIM_BACK} fill="none" stroke="#000" strokeWidth="6.5" />
      {FRONT_TEETH.map((t, i) => <ToothShape key={i} tooth={t} />)}
    </g>
  );
}

function Cylinder() {
  return (
    <g transform="translate(790 540) scale(0.33333)" strokeLinejoin="round" fill="none" stroke="#0404d6">
      <path d="M168 146L732 192L710 600L82 540Z" strokeWidth="8" />
      <path d="M125 290L120 370L145 435L185 485L245 525L310 557L400 570L480 570L560 553L635 517L680 480L718 430L727 290Z" fill="url(#cyl-wall)" stroke="none" />
      <path d="M125 290L120 370L145 435L185 485L245 525L310 557L400 570L480 570L560 553L635 517L680 480L718 430L727 290" strokeWidth="6" />
      <path
        d="M125 270L128 315L150 365L188 412L245 450L315 480L385 494L460 495L555 480L630 450L685 410L720 360L728 310L725 258L700 208L655 165L590 130L510 105L430 95L360 98L300 108L235 132L185 165L145 212Z"
        fill="#e6e6e6"
        stroke="#1a1a8c"
        strokeWidth="3"
      />
      <path d="M128 315L125 270L145 212L185 165L235 132L300 108L360 98L430 95L510 105L590 130L655 165L700 208L725 258L728 310" strokeWidth="7" />
      <path d="M165 72L740 120L715 522L80 466ZM165 72L168 146M740 120L732 192M80 466L82 540M715 522L710 600M82 540L310 562M480 575L710 600" strokeWidth="9" />
    </g>
  );
}

function Viewport() {
  return (
    <main className="relative min-w-0 flex-1 overflow-hidden border-t-2 border-l-2 border-[#777] bg-[#cececc]">
      <svg viewBox="90 114 1528 896" preserveAspectRatio="xMinYMin slice" className="absolute inset-0 size-full" role="img" aria-label="기어와 원기둥 모델">
        <defs>
          <linearGradient id="gear-wall" gradientUnits="userSpaceOnUse" x1="200" y1="0" x2="1178" y2="0">
            <stop offset="0" stopColor="#b4b4b4" />
            <stop offset="0.15" stopColor="#eee" />
            <stop offset="0.28" stopColor="#fff" />
            <stop offset="0.6" stopColor="#fff" />
            <stop offset="0.8" stopColor="#dedede" />
            <stop offset="0.92" stopColor="#b4b4b4" />
            <stop offset="1" stopColor="#777" />
          </linearGradient>
          <linearGradient id="cyl-wall">
            <stop offset="0" stopColor="#a8a8a8" />
            <stop offset="0.12" stopColor="#dcdcdc" />
            <stop offset="0.35" stopColor="#fff" />
            <stop offset="0.78" stopColor="#fff" />
            <stop offset="0.93" stopColor="#dcdcdc" />
            <stop offset="1" stopColor="#b4b4b4" />
          </linearGradient>
        </defs>
        <path d="M563 113L88 709" stroke="#1f9a26" strokeWidth="1.2" />
        <path d="M88 837L1620 1002" stroke="#a01010" strokeWidth="1.2" />
        <Gear />
        <Cylinder />
        <rect x="928" y="403" width="288" height="26" fill="#cbcdcd" />
        <text x="967" y="420" fontSize="17" fill="#c3c5c4" fontFamily="Noto Sans CJK KR, sans-serif">그룹 만들기(G)</text>
        <circle cx="1014" cy="416" r="23.5" fill="none" stroke="#dba9a7" strokeWidth="5" />
        <path d="M637 809V826L641 823L644 829L647 828L644 821H649Z" fill="#000" stroke="#fff" strokeWidth="0.7" />
      </svg>
      <div className="absolute right-[16px] bottom-[10px] flex w-[278px] flex-col items-start gap-[27px] font-['DejaVu_Sans',sans-serif] text-[29px] leading-[45px] font-bold text-white [-webkit-text-stroke:1px_white]">
        <div className="rounded-[5px] bg-[#464646]/50 px-1 shadow-[0_0_5px_rgba(70,70,70,0.35)]">&lt;LButtonDown&gt;</div>
        <div className="rounded-[5px] bg-[#464646]/50 px-1 shadow-[0_0_5px_rgba(70,70,70,0.35)]">&lt;LButtonUp&gt;</div>
      </div>
    </main>
  );
}

/* ---------- Tray ---------- */

function Chevron({ down }: { down?: boolean }) {
  return (
    <svg viewBox="0 0 12 8" className="h-2 w-3 shrink-0" fill="none" aria-hidden="true">
      <path d={down ? "M1 1L6 6.500L11 1" : "M1 7L6 1.500L11 7"} stroke="#505050" strokeWidth="2" />
    </svg>
  );
}

function SectionHeader({ title }: { title: string }) {
  return (
    <div className="flex h-[23px] shrink-0 items-center border-t border-r border-b border-[#a8a8a8] bg-linear-to-b from-[#e6e6e6] to-[#b9b9b9] pr-0.5 pl-[10px]">
      <svg viewBox="0 0 10 9" className="h-[9px] w-[10px]" aria-hidden="true">
        <path d="M0 0H10L5 9Z" fill="#000" />
      </svg>
      <h2 className="ml-[7px] flex-1 text-[16px] leading-5 text-black">{title}</h2>
      <button type="button" aria-label={title + " 닫기"} className="flex size-4 items-center justify-center border border-[#8f8f8f] bg-[#ececec]">
        <svg viewBox="0 0 6 6" className="size-1.5" aria-hidden="true">
          <path d="M0 0L6 6M6 0L0 6" stroke="#000" strokeWidth="1.500" />
        </svg>
      </button>
    </div>
  );
}

function Preview({ className }: { className: string }) {
  return (
    <svg viewBox="0 0 100 100" preserveAspectRatio="none" className={className} aria-hidden="true">
      <rect width="100" height="100" fill="#fff" />
      <path d="M0 0V100H100Z" fill="#a5b2bb" />
    </svg>
  );
}

function Combo({ label, id, value, className }: { label: string; id: string; value: string; className: string }) {
  return (
    <div className={className}>
      <select id={id} aria-label={label} defaultValue={value} className="size-full appearance-none border-t-2 border-l-2 border-[#6e6e6e] border-r border-b border-r-[#c8c8c8] border-b-[#e0e0e0] bg-white pb-0.5 pl-0.5 text-[12px] leading-4 text-black">
        <option>{value}</option>
      </select>
      <span className="pointer-events-none absolute top-0.5 right-0.5 bottom-0.5 flex w-5 items-center justify-center border-r-2 border-b-2 border-[#7b7b7b] bg-[#f0f0f0]">
        <svg viewBox="0 0 10 6" className="h-[6px] w-[10px]" aria-hidden="true">
          <path d="M0 0H10L5 6Z" fill="#000" />
        </svg>
      </span>
    </div>
  );
}

function NavRow({ id, value, underline }: { id: string; value: string; underline?: boolean }) {
  return (
    <div className="flex h-9 shrink-0 items-center border-b border-[#a0a0a0] pl-[3px]">
      {[false, true].map((flip) => (
        <button key={String(flip)} type="button" aria-label={flip ? "앞으로" : "뒤로"} className="flex w-[27px] justify-center">
          <svg viewBox="0 0 16 18" className={flip ? "h-[18px] w-4 -scale-x-100" : "h-[18px] w-4"} fill="#f6f6f6" aria-hidden="true">
            <path d="M1.500 9L9 1.500V5.500H14.500V12.500H9V16.500Z" stroke="#8f8f8f" strokeWidth="1.300" />
          </svg>
        </button>
      ))}
      <button type="button" aria-label="홈" className="flex w-[25px] justify-end">
        <svg viewBox="0 0 20 20" className="size-5" aria-hidden="true">
          <path d="M3 10V19H17V10L10 3Z" fill="#fff" stroke="#111" strokeWidth="1.500" />
          <path d="M1 11L10 2L19 11M4.500 7V2" fill="none" stroke="#111" strokeWidth="1.800" />
          <rect x="7.500" y="11" width="5" height="8" fill="#111" />
        </svg>
      </button>
      <Combo label="재질 모음" id={id} value={value} className={underline ? "relative mx-1.5 h-[27px] flex-1 after:absolute after:right-[26px] after:bottom-[3px] after:left-[5px] after:h-px after:bg-black" : "relative mx-1.5 h-[27px] flex-1"} />
      <button type="button" aria-label="자세히" className="mr-1 flex w-[19px] justify-center">
        <svg viewBox="0 0 17 18" className="h-[18px] w-[17px]" aria-hidden="true">
          <path d="M6 0L17 9L6 18Z" fill="#000" />
          <rect x="0.500" y="3.500" width="8" height="11" fill="#fff" stroke="#333" />
          <rect x="1" y="4" width="7" height="4" fill="#4d8fd6" />
          <path d="M2 10.500H7M2 12.500H7" stroke="#4d8fd6" />
        </svg>
      </button>
    </div>
  );
}

const SWATCHES = [
  "#fccdcd", "#fa9b9b", "#f56666", "#f23636", "#ee0404", "#cc0000", "#9a0000", "#680000", "#fddccd",
  "#fab39b", "#f99166", "#f76b36", "#f04406", "#cc3309", "#982806", "#661a04", "#fee5cd", "#fbce9b",
];

function Expander({ open }: { open?: boolean }) {
  return (
    <svg viewBox="0 0 12 18" className="h-[18px] w-3" aria-hidden="true">
      <rect x="0.500" y="0.500" width="11" height="17" fill="#fff" stroke="#777" />
      {open ? (
        <path d="M0 0H12V10H0ZM3 4V6.500H9V4ZM6 11.500L10 16H2Z" fill="#000" fillRule="evenodd" />
      ) : (
        <path d="M2 2H10L6 6.500ZM0 8H12V18H0ZM5 10V12H3V14H5V16H7V14H9V12H7V10Z" fill="#000" fillRule="evenodd" />
      )}
    </svg>
  );
}

function Tray() {
  return (
    <aside className="flex w-[302px] shrink-0 flex-col border-l-2 border-white bg-[#f0f0f0] pl-1">
      <div className="flex h-[27px] shrink-0 items-center bg-linear-to-b from-[#c0d0e0] to-[#d8e4f2] pr-1 pb-0.5 pl-1">
        <h1 className="flex-1 text-[15px] leading-5 text-[#1e1e1e]">기본 트레이</h1>
        <button type="button" aria-label="고정" className="mr-2.5">
          <svg viewBox="0 0 8 10" className="h-2.5 w-2" aria-hidden="true">
            <path d="M1.500 0.500H6V6H1.500ZM0 6.500H8M4 6.500V10M5.500 0.500V6" fill="none" stroke="#000" strokeWidth="1.200" />
          </svg>
        </button>
        <button type="button" aria-label="트레이 닫기" className="flex size-3 items-center justify-center bg-[#c75050]">
          <svg viewBox="0 0 6 6" className="size-1.5" aria-hidden="true">
            <path d="M0 0L6 6M6 0L0 6" stroke="#fff" strokeWidth="1.500" />
          </svg>
        </button>
      </div>
      <div className="flex min-h-0 flex-1">
        <div className="flex min-w-0 flex-1 flex-col border-r border-white">
          <SectionHeader title="요소 정보" />
          <section className="h-[181px] shrink-0">
            <div className="flex h-[33px] items-center pr-2 pl-[11px]">
              <p className="flex-1 text-[12px] font-bold text-black">98개 요소</p>
              <button type="button" aria-label="세부 정보 표시"><Expander /></button>
            </div>
            <div className="mr-[27px] ml-0.5 h-px bg-[#9a9a9a]" />
            <div className="flex pt-[7px] pr-[11px] pl-[13px]">
              <div className="h-[60px] w-[53px] border border-[#9d9d9d] pt-[3px] pb-1">
                <Preview className="size-full" />
              </div>
              <div className="flex flex-1 items-start justify-end">
                <label htmlFor="layer" className="mr-1 text-[13px] leading-[22px] text-[#1e1e1e]">레이어(<u>L</u>):</label>
                <Combo label="레이어" id="layer" value="Layer0" className="relative h-[23px] w-[117px]" />
              </div>
            </div>
          </section>

          <SectionHeader title="재질" />
          <section className="flex h-[94px] shrink-0 items-start border-b border-[#a0a0a0] pt-[3px] pr-0.5 pl-0.5">
            <div className="h-[87px] w-[77px] border border-[#9d9d9d] pt-[5px] pb-[5px]">
              <Preview className="size-full border-b border-[#8c979f]" />
            </div>
            <input aria-label="재질 이름" disabled defaultValue="기본값" className="ml-[3px] h-[23px] w-[160px] border-t-2 border-l-2 border-[#7d7d7d] border-r border-b border-r-white border-b-white bg-[#f0f0f0] pb-0.5 pl-0.5 text-[12px] leading-4 text-[#7b7b7b]" />
            <div className="flex flex-1 flex-col items-center gap-2 pt-1 pl-[3px]">
              <button type="button" aria-label="보조 창 숨기기"><Expander open /></button>
              <button type="button" aria-label="재질 만들기">
                <svg viewBox="0 0 20 23" className="h-[23px] w-5" aria-hidden="true">
                  <path d="M2 6L11 1L20 4V15L13 21L3 17Z" fill="#111" />
                  <path d="M4 6L12 2M8 7.500L16 3M14 10L19 6M14 14L19 10M4 9L12 11.500" stroke="#e3dcc0" strokeWidth="1.500" />
                  <circle cx="6" cy="16.500" r="5.500" fill="#fff" stroke="#111" strokeWidth="1.300" />
                  <path d="M6 13.500V19.500M3 16.500H9" stroke="#111" strokeWidth="1.500" />
                </svg>
              </button>
              <button type="button" aria-label="기본 재질로 설정" className="-mt-1"><Preview className="size-[26px]" /></button>
            </div>
          </section>

          <div className="flex h-[30px] shrink-0 items-end text-[12px] text-black" role="tablist">
            <button type="button" role="tab" aria-selected="true" className="h-[22px] w-[51px] border-t border-r-2 border-t-white border-r-[#7b7b7b] pr-3 pb-1">선택</button>
            <button type="button" role="tab" aria-selected="false" className="h-5 w-[46px] border-t border-r-2 border-t-white border-r-[#7b7b7b] pr-3">편집</button>
            <button type="button" aria-label="샘플 페인트" className="mr-[5px] mb-1 ml-auto">
              <svg viewBox="0 0 20 20" className="size-5" aria-hidden="true">
                <path d="M1 19L3 14L11 7L13 9L6 16Z" fill="#e2c46a" stroke="#222" />
                <path d="M8 10L12 6L14 8L10 12Z" fill="#fff" stroke="#222" />
                <path d="M10 5L15 10M13 7L16 2Q19 0 19.500 3Q19 5 15 8Z" fill="#444" stroke="#333" strokeWidth="1.800" />
              </svg>
            </button>
          </div>
          <NavRow id="collection" value="색상" />
          <div className="flex min-h-0 flex-1 bg-white">
            <div className="grid flex-1 grid-cols-[repeat(3,62px)] content-start gap-0.5 overflow-hidden pt-0.5 pl-[3px]">
              {SWATCHES.map((c) => (
                <button key={c} type="button" aria-label={c} className="h-[62px] border border-[#8f8f8f] p-px">
                  <span className="block size-full" style={{ backgroundColor: c }} />
                </button>
              ))}
            </div>
            <div className="flex w-[19px] flex-col items-center justify-between bg-[#f0f0f0] pt-1.5 pb-1.5">
              <div className="flex w-full flex-col items-center gap-[7px]">
                <Chevron />
                <div className="h-[21px] w-full bg-[#cdcdcd]" />
              </div>
              <Chevron down />
            </div>
          </div>
          <div className="mt-[3px] h-[3px] shrink-0 bg-[#7b7b7b]" />
          <div className="mt-1 flex h-[22px] shrink-0 items-center border-t border-b border-[#a0a0a0] bg-[#e5e5e5] pl-1 text-[12px] text-black">선택</div>
          <NavRow id="collection-2" value="재질" underline />
          <div className="flex h-[35px] shrink-0 overflow-hidden bg-white">
            <div className="grid flex-1 grid-cols-[repeat(3,62px)] content-start gap-0.5 pt-[3px] pl-[3px]">
              {["폴더 1", "폴더 2", "폴더 3"].map((f) => (
                <button key={f} type="button" aria-label={f} className="flex h-[62px] justify-center border border-[#8f8f8f] pt-3">
                  <svg viewBox="0 0 36 36" className="size-9" aria-hidden="true">
                    <path d="M2 4L12 2L13 5L30 3V30H6Z" fill="#8fbbd9" stroke="#3d5f78" />
                    <path d="M6 9L35 1L32 32L8 34Z" fill="#b49771" stroke="#444" />
                  </svg>
                </button>
              ))}
            </div>
            <div className="flex w-[19px] flex-col items-center gap-2 bg-[#f0f0f0] pt-2">
              <Chevron />
              <div className="w-full flex-1 bg-[#cdcdcd]" />
            </div>
          </div>
        </div>
        <div className="flex w-5 shrink-0 flex-col items-center justify-between pt-2 pb-[7px]">
          <div className="flex w-full flex-col items-center gap-1.5">
            <Chevron />
            <div className="h-[21px] w-full bg-[#cdcdcd]" />
          </div>
          <Chevron down />
        </div>
      </div>
    </aside>
  );
}

/* ---------- Status bar ---------- */

function StatusBar() {
  return (
    <footer className="flex h-[26px] shrink-0 items-center bg-[#f0f0f0] text-[17px] leading-[22px] text-[#1a1a1a]">
      <div className="flex w-[112px] shrink-0 items-center gap-[17px] border-r border-[#9a9a9a] pl-[7px]">
        <svg viewBox="0 0 18 18" className="size-[18px] shrink-0" fill="none" aria-label="위치" role="img">
          <circle cx="9" cy="9" r="8" stroke="#a3a3a3" strokeWidth="1.300" />
          <path d="M9 15L6 8A3.200 3.200 0 1 1 12 8Z" fill="#9a9a9a" />
        </svg>
        <svg viewBox="0 0 18 18" className="size-[18px] shrink-0" fill="none" aria-label="저작자" role="img">
          <circle cx="9" cy="9" r="8" stroke="#000" strokeWidth="1.600" />
          <circle cx="9" cy="4.500" r="1.500" fill="#000" />
          <path d="M6.500 6.500H11.500V10.500H10.500V15H7.500V10.500H6.500Z" fill="#000" />
        </svg>
        <svg viewBox="0 0 18 18" className="size-[18px] shrink-0" fill="none" aria-label="로그인" role="img">
          <circle cx="9" cy="9" r="8" stroke="#a3a3a3" strokeWidth="1.300" />
          <circle cx="9" cy="6.500" r="3" fill="#9a9a9a" />
          <path d="M3.500 14C4 10.500 14 10.500 14.500 14Q9 18 3.500 14Z" fill="#9a9a9a" />
        </svg>
      </div>
      <p className="min-w-0 flex-1 pt-[3px] pl-1.5 whitespace-nowrap">개체를 선택하십시오. 선택을 확대하려면 Shift를 누르십시오. 여러 항목을 선택하려면 마우스를 끄십시오.</p>
      <div className="h-3.5 w-px bg-[#8a8a8a]" />
      <label htmlFor="measure" className="w-[51px] pt-[3px] pl-[11px]">단위</label>
      <input id="measure" className="mr-1 h-[22px] w-[251px] self-end border border-b-0 border-[#b4bfd3] bg-[#f0f0f0]" />
    </footer>
  );
}

export default function App() {
  return (
    <div className="flex h-screen flex-col overflow-hidden bg-white pt-10 pb-11 font-['Noto_Sans_CJK_KR',sans-serif]">
      <nav className="flex h-6 shrink-0 items-center gap-4 pt-0.5 pl-[7px] text-[15px] leading-[22px] text-[#1a1a1a]" aria-label="메뉴">
        {MENUS.map((m) => (
          <button key={m} type="button">{m}</button>
        ))}
      </nav>
      <TopToolbar />
      <div className="relative flex min-h-0 flex-1">
        <LeftToolbar />
        <Viewport />
        <Tray />
        <div className="pointer-events-none absolute right-[610px] bottom-0 left-0 h-[73px] bg-black/43" />
      </div>
      <StatusBar />
    </div>
  );
}
